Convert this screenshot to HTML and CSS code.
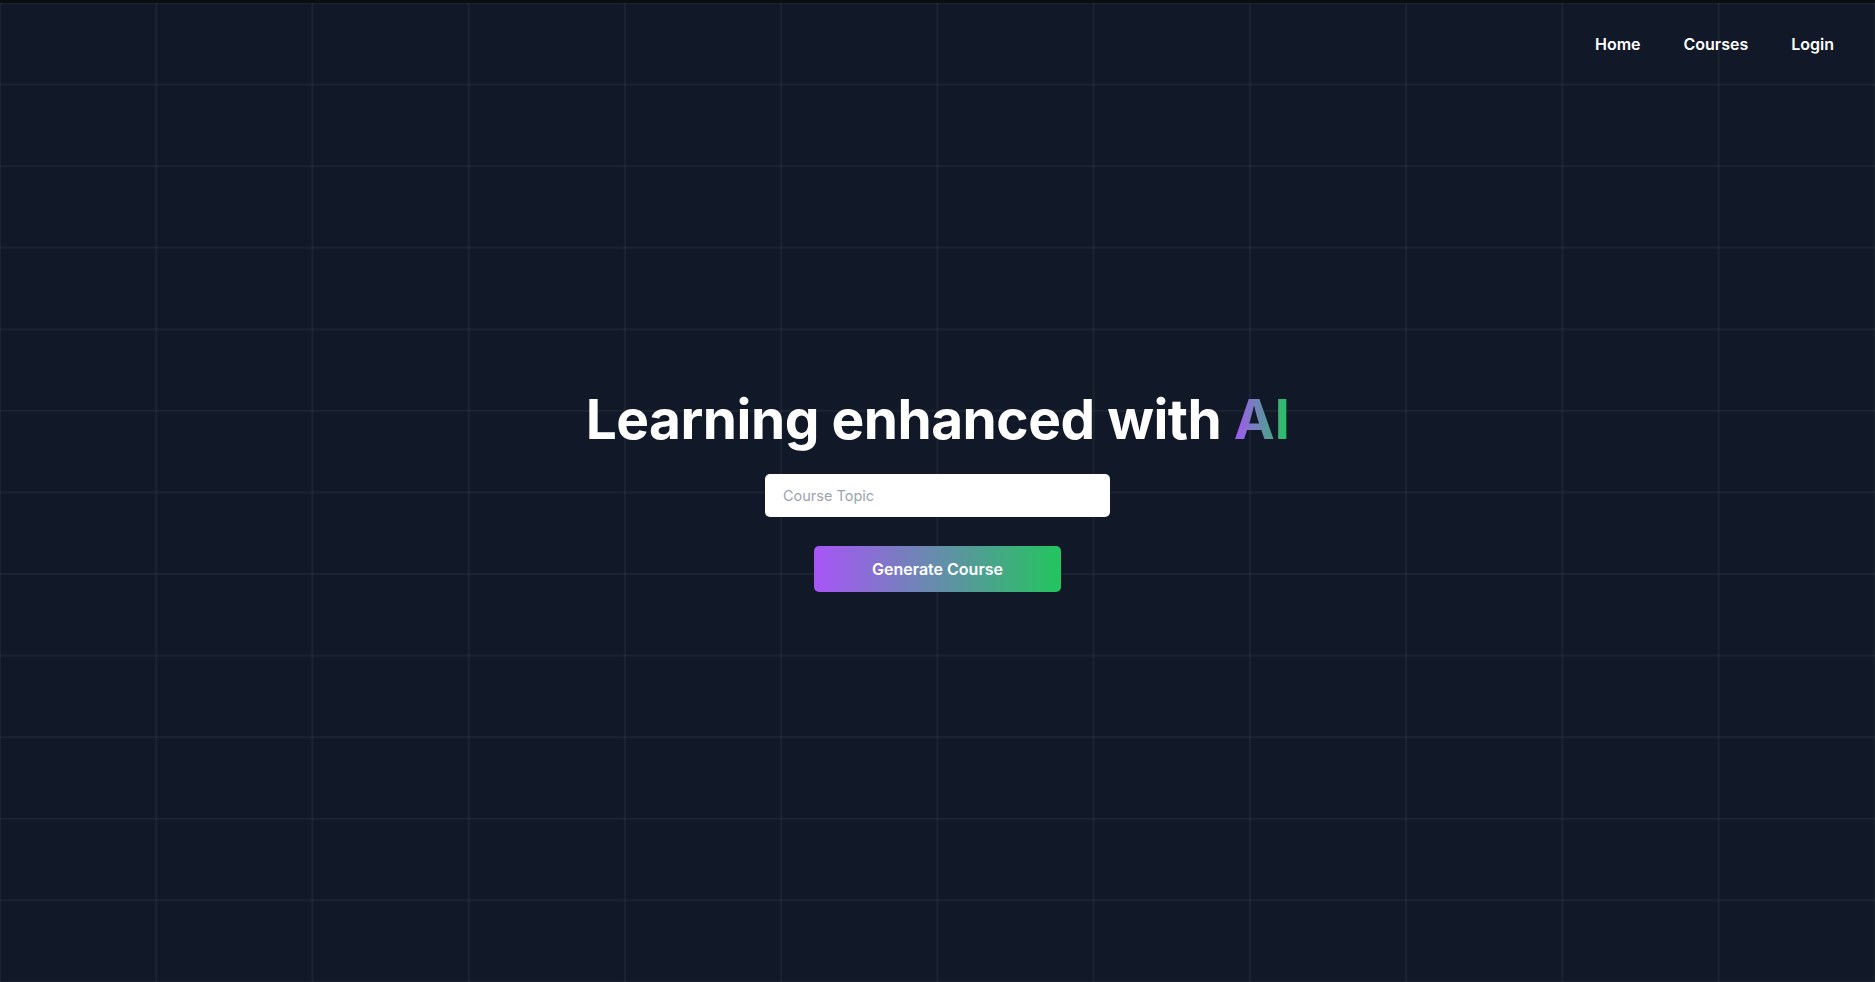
FILE: index.html
```html
<!DOCTYPE html>
<html lang="en">
<head>
<meta charset="utf-8">
<title>Learning enhanced with AI</title>
<link rel="stylesheet" href="styles.css">
</head>
<body>
<div class="topbar"></div>
<div class="page">
  <nav class="nav">
    <a class="nav-link" href="#">Home</a>
    <a class="nav-link" href="#">Courses</a>
    <a class="nav-link" href="#">Login</a>
  </nav>
  <main class="hero">
    <h1 class="title">Learning enhanced with <span class="ai">AI</span></h1>
    <input class="topic" type="text" placeholder="Course Topic">
    <button class="generate" type="button">Generate Course</button>
  </main>
</div>
</body>
</html>
```
FILE: styles.css
```css
* { box-sizing: border-box; }
html, body { margin: 0; padding: 0; }
body {
  background: #111827;
  font-family: Inter, "Noto Sans", sans-serif;
  color: #ffffff;
  height: 100vh;
  overflow: hidden;
  display: flex;
  flex-direction: column;
}
.topbar {
  height: 3px;
  background: #0b0d12;
  flex: none;
}
.page {
  flex: 1;
  display: flex;
  flex-direction: column;
  background-color: #111827;
  background-image:
    linear-gradient(to right, rgba(255,255,255,0.045) 2px, transparent 2px),
    linear-gradient(to bottom, rgba(255,255,255,0.045) 2px, transparent 2px);
  background-size: calc(100% / 12) calc(100% / 12);
  background-position: -1px -1px;
}
.nav {
  display: flex;
  justify-content: flex-end;
  gap: 43px;
  padding: 31px 41px 0 0;
  height: 76px;
}
.nav-link {
  color: #ffffff;
  text-decoration: none;
  font-weight: 600;
  font-size: 16px;
  line-height: 20px;
}
.hero {
  flex: 1;
  display: flex;
  flex-direction: column;
  align-items: center;
  padding-top: 310px;
}
.title {
  margin: 0;
  font-size: 55px;
  font-weight: 700;
  line-height: 60px;
  letter-spacing: -0.5px;
}
.ai {
  background: linear-gradient(to right, #a855f7, #22c55e);
  -webkit-background-clip: text;
  background-clip: text;
  color: transparent;
}
.topic {
  margin-top: 25px;
  width: 345px;
  height: 43px;
  border: none;
  border-radius: 5px;
  background: #ffffff;
  padding: 0 18px;
  font-family: Inter, "Noto Sans", sans-serif;
  font-size: 14.5px;
  color: #111827;
  outline: none;
}
.topic::placeholder { color: #9ca3af; }
.generate {
  margin-top: 29px;
  width: 247px;
  height: 46px;
  border: none;
  border-radius: 5px;
  background: linear-gradient(to right, #a855f7, #22c55e);
  color: #ffffff;
  font-family: Inter, "Noto Sans", sans-serif;
  font-size: 16px;
  font-weight: 600;
  cursor: pointer;
}
```
